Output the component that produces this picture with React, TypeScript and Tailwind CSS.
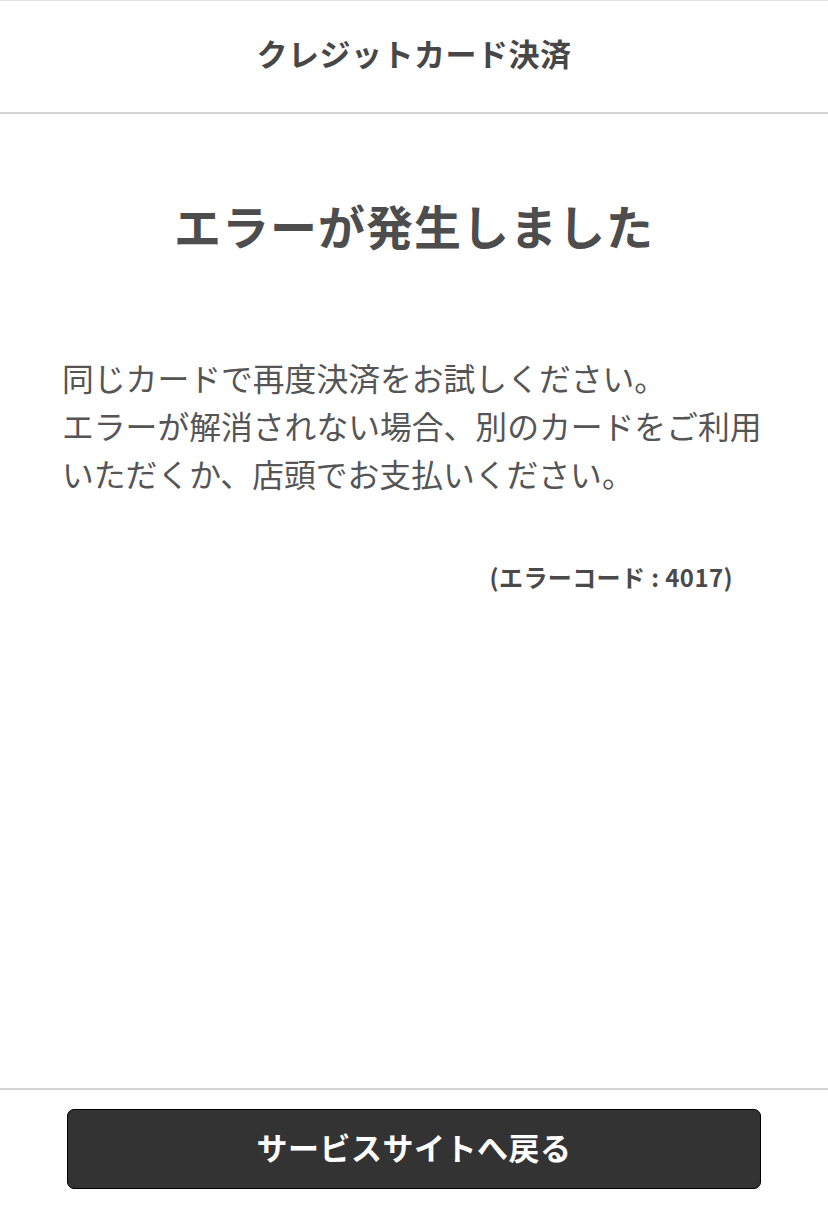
import React from 'react';

const font = { fontFamily: '"Noto Sans CJK JP", "Noto Sans", sans-serif' };

const App: React.FC = () => {
    return (
        <div className="flex flex-col h-[1209px] bg-white text-[#4a4a4a] border-t border-[#e5e5e5]" style={font}>
            {/* Header */}
            <header className="h-[113px] shrink-0 flex items-center justify-center border-b-2 border-[#d4d4d4]">
                <h1 className="text-[31px] font-bold tracking-[0.5px] text-[#474747] -mt-[6px]">クレジットカード決済</h1>
            </header>

            {/* Message */}
            <main className="flex-1 pt-[78px]">
                <h2 className="text-center text-[47px] font-bold leading-[66px] text-[#4d4d4d] tracking-[1px]">エラーが発生しました</h2>
                <p className="mt-[95px] pl-[62px] pr-[60px] text-[31.8px] leading-[48px] text-[#555] whitespace-nowrap">
                    同じカードで再度決済をお試しください。<br />
                    エラーが解消されない場合、別のカードをご利用<br />
                    いただくか、店頭でお支払いください。
                </p>
                <p className="mt-[63px] pr-[95px] text-right text-[24px] font-bold leading-[34px] tracking-[0.4px] text-[#4a4a4a]">
                    (エラーコード&nbsp;:&nbsp;4017)
                </p>
            </main>

            {/* Footer */}
            <footer className="shrink-0 border-t-2 border-[#d4d4d4] px-[67px] pt-[19px] pb-[20px]">
                <button className="w-full h-[80px] rounded-[7px] bg-[#333] border border-black text-white text-[31px] font-bold tracking-[0.5px] pb-[3px]">
                    サービスサイトへ戻る
                </button>
            </footer>
        </div>
    );
};

export default App;
